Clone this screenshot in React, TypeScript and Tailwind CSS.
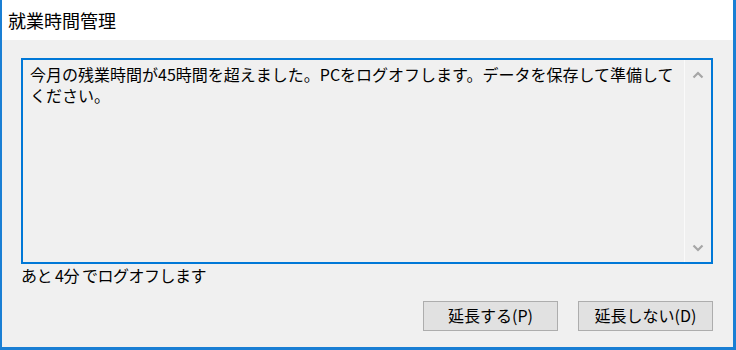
const font = "font-['Noto_Sans_CJK_JP','Noto_Sans_CJK_SC',sans-serif]";

function Chevron({ down }: { down?: boolean }) {
  return (
    <svg width="12" height="8" viewBox="0 0 12 8" className="text-[#a6a6a6]">
      <path
        d={down ? "M1.5 1.5 L6 6 L10.5 1.5" : "M1.5 6.5 L6 2 L10.5 6.5"}
        fill="none"
        stroke="currentColor"
        strokeWidth="2.2"
      />
    </svg>
  );
}

function DialogButton({ label }: { label: string }) {
  return (
    <button
      className={`flex h-[30px] w-[135px] items-center justify-center border border-[#adadad] bg-[#e1e1e1] pb-[2px] text-[16px] leading-none text-black ${font}`}
    >
      {label}
    </button>
  );
}

export default function App() {
  return (
    <div
      className={`flex h-[350px] w-[736px] flex-col border-b-[3px] border-l-2 border-r-[3px] border-[#1a7fd4] bg-[#f0f0f0] text-black ${font}`}
    >
      {/* Title bar */}
      <div className="flex h-[40px] shrink-0 items-center bg-white pl-[6px] text-[18px] leading-none">
        就業時間管理
      </div>

      {/* Body */}
      <div className="flex flex-1 flex-col pl-[19px] pr-[20px] pt-[18px]">
        {/* Message box */}
        <div className="flex h-[206px] border-2 border-[#0078d7] bg-[#f0f0f0]">
          <div className="flex-1 pl-[7px] pt-[4px] text-[16px] leading-[21px]">
            <div className="whitespace-nowrap">
              今月の残業時間が45時間を超えました。PCをログオフします。データを保存して準備して
            </div>
            <div className="whitespace-nowrap">ください。</div>
          </div>

          {/* Scrollbar */}
          <div className="flex w-[27px] flex-col items-center justify-between border-l border-[#fafafa] pb-[10px] pt-[11px]">
            <Chevron />
            <Chevron down />
          </div>
        </div>

        {/* Countdown */}
        <div className="mt-[1px] text-[16px] leading-[20px] tracking-[-0.5px]">あと 4分 でログオフします</div>

        {/* Buttons */}
        <div className="mt-[16px] flex justify-end gap-[20px]">
          <DialogButton label="延長する(P)" />
          <DialogButton label="延長しない(D)" />
        </div>
      </div>
    </div>
  );
}
